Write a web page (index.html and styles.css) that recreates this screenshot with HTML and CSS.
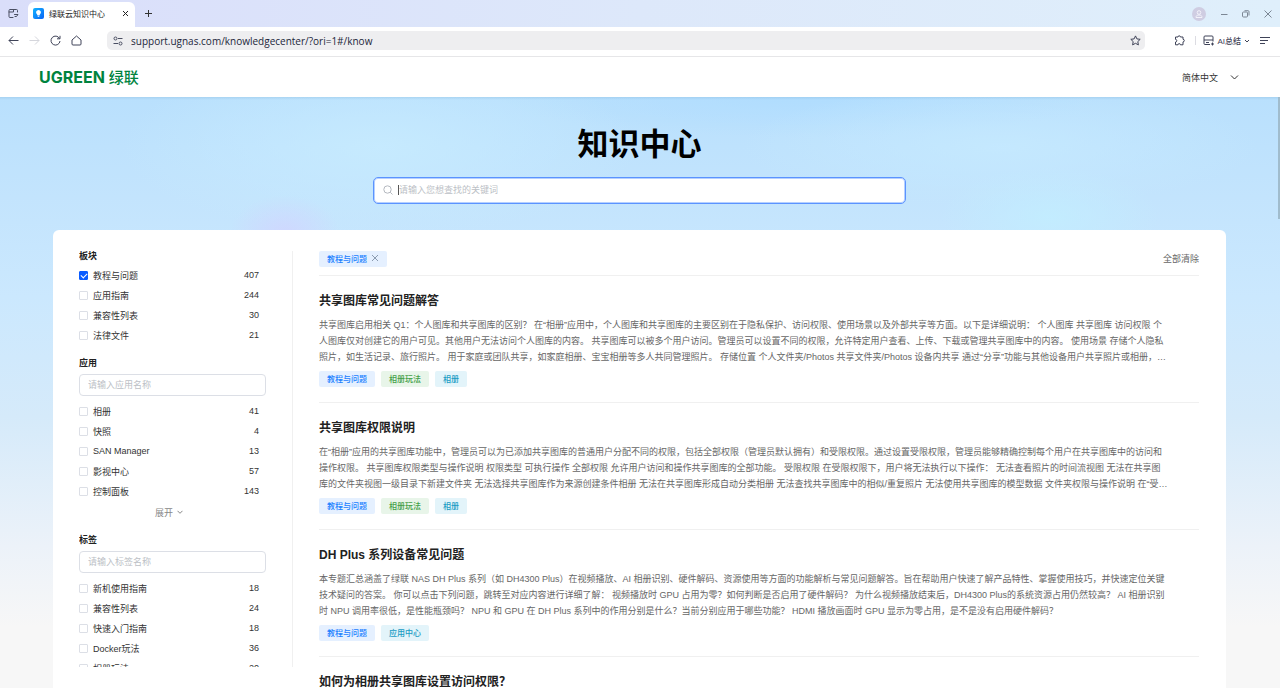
FILE: index.html
```html
<!DOCTYPE html>
<html lang="zh-CN">
<head>
    <meta charset="UTF-8">
    <meta name="viewport" content="width=device-width, initial-scale=1.0">
    <title>绿联云知识中心</title>
    <link rel="stylesheet" href="styles.css">
</head>
<body>
    <!-- 浏览器标签栏 -->
    <div class="tab-bar">
        <button class="icon-button workspace" aria-label="工作区">
            <svg width="11" height="11" viewBox="0 0 11 11" fill="none" stroke="#4a4f63" stroke-linecap="round" stroke-linejoin="round">
                <path d="M5 9.500H2A1 1 0 0 1 1 8.500V2.500A1 1 0 0 1 2 1.500H8.500A1 1 0 0 1 9.500 2.500V4M1 4H5.500V1.500M6.500 6.500H10L8.500 8.500H7"/>
            </svg>
        </button>
        <div class="tab">
            <svg width="11" height="11" viewBox="0 0 11 11">
                <defs>
                    <linearGradient id="fav" x1="0" y1="0" x2="1" y2="1">
                        <stop offset="0" stop-color="#12b4ff"/>
                        <stop offset="1" stop-color="#0a63f6"/>
                    </linearGradient>
                </defs>
                <rect width="11" height="11" rx="2" fill="url(#fav)"/>
                <path d="M5.500 2A2.400 2.400 0 0 1 7 6.300L6.500 7.500H4.500L4 6.300A2.400 2.400 0 0 1 5.500 2ZM4.700 8.200H6.300V9H4.700Z" fill="#fff"/>
            </svg>
            <span class="tab-title">绿联云知识中心</span>
            <button class="icon-button" aria-label="关闭标签页">
                <svg width="7" height="7" viewBox="0 0 7 7" stroke="#222"><path d="M1 1L6 6M6 1L1 6"/></svg>
            </button>
        </div>
        <button class="icon-button new-tab" aria-label="新建标签页">
            <svg width="9" height="9" viewBox="0 0 9 9" stroke="#333"><path d="M4.500 1V8M1 4.500H8"/></svg>
        </button>
        <div class="window-controls">
            <button class="icon-button" aria-label="用户">
                <svg width="14" height="14" viewBox="0 0 14 14">
                    <circle cx="7" cy="7" r="7" fill="#cfcde2"/>
                    <circle cx="7" cy="5.500" r="1.800" fill="none" stroke="#f3f2fa"/>
                    <path d="M4 10.500C4 8.700 5 8 7 8S10 8.700 10 10.500Z" fill="none" stroke="#f3f2fa"/>
                </svg>
            </button>
            <button class="icon-button" aria-label="最小化">
                <svg width="8" height="8" viewBox="0 0 8 8" stroke="#7c8794"><path d="M1 4.500H7.500"/></svg>
            </button>
            <button class="icon-button" aria-label="还原">
                <svg width="8" height="8" viewBox="0 0 8 8" fill="none" stroke="#7c8794"><rect x="0.500" y="2" width="5" height="5" rx="1"/><path d="M2.500 0.700H6A1 1 0 0 1 7 1.700V5.500"/></svg>
            </button>
            <button class="icon-button" aria-label="关闭">
                <svg width="8" height="8" viewBox="0 0 8 8" stroke="#7c8794"><path d="M0.500 0.500L7.500 7.500M7.500 0.500L0.500 7.500"/></svg>
            </button>
        </div>
    </div>

    <!-- 地址栏 -->
    <div class="toolbar">
        <div class="nav-buttons">
            <button class="icon-button" aria-label="后退">
                <svg width="11" height="11" viewBox="0 0 11 11" fill="none" stroke="#3f4358"><path d="M10.500 5.500H1M5 1.500L1 5.500L5 9.500"/></svg>
            </button>
            <button class="icon-button" aria-label="前进">
                <svg width="11" height="11" viewBox="0 0 11 11" fill="none" stroke="#d5d6dc"><path d="M0.500 5.500H10M6 1.500L10 5.500L6 9.500"/></svg>
            </button>
            <button class="icon-button" aria-label="刷新">
                <svg width="11" height="11" viewBox="0 0 11 11" fill="none" stroke="#3f4358"><path d="M9.500 3.500A4.500 4.500 0 1 0 10 6M10 0.800V3.800H7"/></svg>
            </button>
            <button class="icon-button" aria-label="主页">
                <svg width="11" height="11" viewBox="0 0 11 11" fill="none" stroke="#3f4358" stroke-linejoin="round"><path d="M1 5L5.500 1L10 5V9A1 1 0 0 1 9 10H2A1 1 0 0 1 1 9Z"/></svg>
            </button>
        </div>
        <div class="address">
            <svg width="10" height="10" viewBox="0 0 10 10" fill="none" stroke="#4a4f63"><circle cx="2.500" cy="2.500" r="1.500"/><path d="M5 2.500H9.500M0.500 7.500H5"/><circle cx="7.500" cy="7.500" r="1.500"/></svg>
            <input type="text" value="support.ugnas.com/knowledgecenter/?ori=1#/know" aria-label="地址">
            <button class="icon-button" aria-label="收藏">
                <svg width="11" height="11" viewBox="0 0 11 11" fill="none" stroke="#3f4358" stroke-linejoin="round"><path d="M5.500 0.900L6.900 3.900L10.200 4.300L7.800 6.600L8.400 9.900L5.500 8.300L2.600 9.900L3.200 6.600L0.800 4.300L4.100 3.900Z"/></svg>
            </button>
        </div>
        <div class="tools">
            <button class="icon-button" aria-label="扩展">
                <svg width="11" height="11" viewBox="0 0 11 11" fill="none" stroke="#3f4358" stroke-linejoin="round"><path d="M1.500 2H4A1.200 1.200 0 0 1 6.400 2H9V4.300A1.300 1.300 0 0 1 9 6.900V9.800H6.400A1.200 1.200 0 0 0 4 9.800H1.500V7A1.300 1.300 0 0 0 1.500 4.400Z"/></svg>
            </button>
            <span class="divider"></span>
            <button class="ai-button">
                <svg width="11" height="11" viewBox="0 0 11 11" fill="none" stroke="#3f4358"><path d="M7 9.500H2A1 1 0 0 1 1 8.500V2A1 1 0 0 1 2 1H9A1 1 0 0 1 10 2V6.500M1 5H10M3 7.500H6M9.500 7.500V10.500M8 9H11"/></svg>
                AI总结
                <svg width="6" height="6" viewBox="0 0 6 6" fill="none" stroke="#3f4358"><path d="M1 2L3 4L5 2"/></svg>
            </button>
            <button class="icon-button" aria-label="菜单">
                <svg width="10" height="9" viewBox="0 0 10 9" stroke="#3f4358"><path d="M0 1.500H10M0 4.500H8M0 7.500H5"/></svg>
            </button>
        </div>
    </div>

    <!-- 站点头部 -->
    <header class="site-header">
        <a class="logo" href="#"><span class="logo-en">UGREEN</span><span class="logo-cn">绿联</span></a>
        <button class="language">
            简体中文
            <svg width="9" height="9" viewBox="0 0 9 9" fill="none" stroke="#333"><path d="M1 2.500L4.500 6L8 2.500"/></svg>
        </button>
    </header>

    <main class="page">
        <span class="scroll-thumb"></span>
        <h1>知识中心</h1>
        <label class="search-box">
            <svg width="10" height="10" viewBox="0 0 10 10" fill="none" stroke="#b4b8bf"><circle cx="4.500" cy="4.500" r="3.700"/><path d="M7.200 7.200L9.500 9.500"/></svg>
            <span class="caret"></span>
            <input type="text" placeholder="请输入您想查找的关键词" aria-label="搜索">
        </label>

        <div class="panel">
            <!-- 左侧筛选 -->
            <aside class="sidebar">
                <section>
                    <h2>板块</h2>
                    <ul class="options">
                        <li><label><input type="checkbox" checked>教程与问题</label><span>407</span></li>
                        <li><label><input type="checkbox">应用指南</label><span>244</span></li>
                        <li><label><input type="checkbox">兼容性列表</label><span>30</span></li>
                        <li><label><input type="checkbox">法律文件</label><span>21</span></li>
                    </ul>
                </section>
                <section>
                    <h2>应用</h2>
                    <input class="filter-input" type="text" placeholder="请输入应用名称" aria-label="应用名称">
                    <ul class="options">
                        <li><label><input type="checkbox">相册</label><span>41</span></li>
                        <li><label><input type="checkbox">快照</label><span>4</span></li>
                        <li><label><input type="checkbox">SAN Manager</label><span>13</span></li>
                        <li><label><input type="checkbox">影视中心</label><span>57</span></li>
                        <li><label><input type="checkbox">控制面板</label><span>143</span></li>
                    </ul>
                    <button class="expand">
                        展开
                        <svg width="6" height="6" viewBox="0 0 6 6" fill="none" stroke="#888"><path d="M0.500 1.800L3 4.300L5.500 1.800"/></svg>
                    </button>
                </section>
                <section>
                    <h2>标签</h2>
                    <input class="filter-input" type="text" placeholder="请输入标签名称" aria-label="标签名称">
                    <ul class="options">
                        <li><label><input type="checkbox">新机使用指南</label><span>18</span></li>
                        <li><label><input type="checkbox">兼容性列表</label><span>24</span></li>
                        <li><label><input type="checkbox">快速入门指南</label><span>18</span></li>
                        <li><label><input type="checkbox">Docker玩法</label><span>36</span></li>
                        <li><label><input type="checkbox">相册玩法</label><span>20</span></li>
                    </ul>
                </section>
            </aside>

            <!-- 右侧文章列表 -->
            <div class="content">
                <div class="filter-bar">
                    <span class="tag blue">教程与问题
                        <button class="icon-button" aria-label="移除">
                            <svg width="8" height="8" viewBox="0 0 8 8" stroke="#8b9bb0"><path d="M1 1L7 7M7 1L1 7"/></svg>
                        </button>
                    </span>
                    <button class="clear">全部清除</button>
                </div>
                <article>
                    <h3>共享图库常见问题解答</h3>
                    <p>共享图库启用相关 Q1：个人图库和共享图库的区别？ 在“相册”应用中，个人图库和共享图库的主要区别在于隐私保护、访问权限、使用场景以及外部共享等方面。以下是详细说明： 个人图库 共享图库 访问权限 个人图库仅对创建它的用户可见。其他用户无法访问个人图库的内容。 共享图库可以被多个用户访问。管理员可以设置不同的权限，允许特定用户查看、上传、下载或管理共享图库中的内容。 使用场景 存储个人隐私照片，如生活记录、旅行照片。 用于家庭或团队共享，如家庭相册、宝宝相册等多人共同管理照片。 存储位置 个人文件夹/Photos 共享文件夹/Photos 设备内共享 通过“分享”功能与其他设备用户共享照片或相册，…</p>
                    <div class="tags">
                        <span class="tag blue">教程与问题</span>
                        <span class="tag green">相册玩法</span>
                        <span class="tag cyan">相册</span>
                    </div>
                </article>
                <article>
                    <h3>共享图库权限说明</h3>
                    <p>在“相册”应用的共享图库功能中，管理员可以为已添加共享图库的普通用户分配不同的权限，包括全部权限（管理员默认拥有）和受限权限。通过设置受限权限，管理员能够精确控制每个用户在共享图库中的访问和操作权限。 共享图库权限类型与操作说明 权限类型 可执行操作 全部权限 允许用户访问和操作共享图库的全部功能。 受限权限 在受限权限下，用户将无法执行以下操作： 无法查看照片的时间流视图 无法在共享图库的文件夹视图一级目录下新建文件夹 无法选择共享图库作为来源创建条件相册 无法在共享图库形成自动分类相册 无法查找共享图库中的相似/重复照片 无法使用共享图库的模型数据 文件夹权限与操作说明 在“受…</p>
                    <div class="tags">
                        <span class="tag blue">教程与问题</span>
                        <span class="tag green">相册玩法</span>
                        <span class="tag cyan">相册</span>
                    </div>
                </article>
                <article>
                    <h3>DH Plus 系列设备常见问题</h3>
                    <p>本专题汇总涵盖了绿联 NAS DH Plus 系列（如 DH4300 Plus）在视频播放、AI 相册识别、硬件解码、资源使用等方面的功能解析与常见问题解答。旨在帮助用户快速了解产品特性、掌握使用技巧，并快速定位关键技术疑问的答案。 你可以点击下列问题，跳转至对应内容进行详细了解： 视频播放时 GPU 占用为零？如何判断是否启用了硬件解码？ 为什么视频播放结束后，DH4300 Plus的系统资源占用仍然较高？ AI 相册识别时 NPU 调用率很低，是性能瓶颈吗？ NPU 和 GPU 在 DH Plus 系列中的作用分别是什么？当前分别应用于哪些功能？ HDMI 播放画面时 GPU 显示为零占用，是不是没有启用硬件解码？</p>
                    <div class="tags">
                        <span class="tag blue">教程与问题</span>
                        <span class="tag cyan">应用中心</span>
                    </div>
                </article>
                <article>
                    <h3>如何为相册共享图库设置访问权限？</h3>
                </article>
            </div>
        </div>
    </main>
</body>
</html>
```
FILE: styles.css
```css
:root {
    --text-primary: #222;
    --text-secondary: #666;
    --accent: #0a5cff;
    --green: #00833e;
    --border-color: #dcdfe6;
    --line-color: #f0f0f0;
    --chrome-icon: #3f4358;
}

* {
    box-sizing: border-box;
}

body {
    margin: 0;
    height: 100vh;
    overflow: hidden;
    display: flex;
    flex-direction: column;
    background: #fff;
    color: var(--text-primary);
    font-family: "Liberation Sans", "Noto Sans CJK SC", sans-serif;
    font-size: 9px;
}

button, input {
    margin: 0;
    padding: 0;
    border: none;
    background: none;
    color: inherit;
    font: inherit;
    outline: none;
}

svg {
    display: block;
    flex-shrink: 0;
}

h1, h2, h3, p, ul {
    margin: 0;
    padding: 0;
}

.icon-button {
    display: flex;
    flex-shrink: 0;
    cursor: pointer;
}

/* 标签栏 */
.tab-bar {
    display: flex;
    align-items: center;
    height: 27px;
    flex-shrink: 0;
    padding: 0 8px;
    background: linear-gradient(90deg, #dadefa, #dde8fa 50%, #dfeffb);
}

.tab {
    display: flex;
    align-items: center;
    align-self: flex-end;
    gap: 5px;
    width: 107px;
    height: 25px;
    margin-left: 9px;
    padding: 0 6px 2px 5px;
    background: #fff;
    border-radius: 6px 6px 0 0;
}

.tab-title {
    flex: 1;
    font-size: 8px;
    white-space: nowrap;
}

.new-tab {
    margin-left: 9px;
}

.window-controls {
    display: flex;
    align-items: center;
    gap: 14px;
    margin-left: auto;
}

/* 地址栏 */
.toolbar {
    display: flex;
    align-items: center;
    height: 30px;
    flex-shrink: 0;
    padding: 0 10px 2px 8px;
    border-bottom: 1px solid #e6e6e8;
}

.nav-buttons {
    display: flex;
    gap: 10px;
    width: 99px;
}

.address {
    flex: 1;
    display: flex;
    align-items: center;
    gap: 8px;
    height: 19px;
    padding: 0 4px 0 6px;
    background: #eeeef0;
    border-radius: 5px;
}

.address input {
    flex: 1;
    color: #22263a;
    font-family: "Open Sans", sans-serif;
    font-size: 10px;
}

.tools {
    display: flex;
    align-items: center;
    gap: 10px;
    margin-left: 29px;
}

.divider {
    width: 1px;
    height: 9px;
    background: #dcdce2;
}

.ai-button {
    display: flex;
    align-items: center;
    gap: 3px;
    margin-left: -3px;
    color: var(--chrome-icon);
    font-size: 8px;
    font-weight: 500;
}

/* 站点头部 */
.site-header {
    display: flex;
    align-items: center;
    justify-content: space-between;
    height: 40px;
    flex-shrink: 0;
    padding: 0 41px 0 39px;
}

.logo {
    display: flex;
    align-items: center;
    gap: 4px;
    color: var(--green);
    line-height: 16px;
    text-decoration: none;
}

.logo-en {
    font-family: Inter, sans-serif;
    font-size: 16px;
    font-weight: 700;
}

.logo-cn {
    font-family: "Noto Sans CJK SC", sans-serif;
    font-size: 15px;
    font-weight: 500;
}

.language {
    display: flex;
    align-items: center;
    gap: 12px;
    color: #333;
}

/* 页面主体 */
.page {
    position: relative;
    flex: 1;
    min-height: 0;
    display: flex;
    flex-direction: column;
    align-items: center;
    padding: 28px 54px 0 53px;
    overflow: hidden;
    background:
        linear-gradient(rgba(140, 190, 225, 0.4), transparent 3px),
        radial-gradient(55px 38px at 285px 136px, rgba(208, 214, 255, 0.9), transparent),
        radial-gradient(110px 50px at 1050px 120px, rgba(194, 238, 255, 0.8), transparent),
        radial-gradient(260px 90px at 380px 50px, rgba(200, 236, 255, 0.8), transparent),
        radial-gradient(260px 60px at 1000px 50px, rgba(198, 234, 255, 0.8), transparent),
        radial-gradient(300px 40px at 800px 0, rgba(174, 220, 255, 0.8), transparent),
        linear-gradient(#b9e0fd, #c3e4fd 100px, #cbe8fe 200px, #d5eafa 320px, #ecf2f9 450px, #f7f7f7 530px);
}

.scroll-thumb {
    position: absolute;
    top: 0;
    right: 0;
    width: 2px;
    height: 122px;
    background: #a0bccd;
}

h1 {
    color: #000;
    font-size: 31px;
    line-height: 40px;
    font-weight: 700;
}

.search-box {
    display: flex;
    align-items: center;
    width: 533px;
    max-width: 100%;
    height: 27px;
    flex-shrink: 0;
    margin: 12px 0 26px;
    padding: 0 9px 1px;
    background: #fff;
    border: 1px solid #5b93ff;
    border-radius: 5px;
    box-shadow: inset 0 0 0 1px #b5d0ff;
}

.caret {
    width: 1px;
    height: 10px;
    margin-left: 5px;
    background: #555;
}

.search-box input {
    flex: 1;
}

::placeholder {
    color: #bcbfc6;
    opacity: 1;
}

.panel {
    display: flex;
    align-self: stretch;
    flex: 1;
    min-height: 0;
    padding: 21px 27px 0 26px;
    background: #fff;
    border-radius: 6px 6px 0 0;
}

/* 左侧筛选 */
.sidebar {
    width: 214px;
    height: calc(100% - 21px);
    flex-shrink: 0;
    padding-right: 26px;
    overflow: hidden;
    border-right: 1px solid var(--line-color);
}

.sidebar section + section {
    margin-top: 13px;
}

.sidebar h2 {
    font-size: 9px;
    line-height: 10px;
    font-weight: 700;
}

.options {
    margin-top: 4px;
    padding-right: 7px;
    list-style: none;
}

.options li {
    display: flex;
    align-items: center;
    justify-content: space-between;
    height: 20px;
    color: #333;
}

.options label {
    display: flex;
    align-items: center;
    gap: 5px;
}

.options input {
    appearance: none;
    width: 9px;
    height: 9px;
    border: 1px solid var(--border-color);
    border-radius: 1px;
    background: #fff;
}

.options input:checked {
    border-color: var(--accent);
    background: var(--accent);
}

.options input:checked::before {
    content: "";
    display: block;
    width: 3px;
    height: 5px;
    margin-left: 2px;
    border: solid #fff;
    border-width: 0 1px 1px 0;
    transform: rotate(45deg);
}

.filter-input {
    display: block;
    width: 100%;
    height: 22px;
    margin: 6px 0 5px;
    padding: 0 8px;
    border: 1px solid var(--border-color);
    border-radius: 4px;
}

.filter-input + .options {
    margin-top: 5px;
}

.expand {
    display: flex;
    align-items: center;
    justify-content: center;
    gap: 4px;
    width: 100%;
    height: 20px;
    margin-top: 1px;
    padding-right: 7px;
    color: #888;
}

/* 文章列表 */
.content {
    flex: 1;
    min-width: 0;
    padding-left: 26px;
}

.filter-bar {
    display: flex;
    justify-content: space-between;
    height: 25px;
    border-bottom: 1px solid var(--line-color);
}

.clear {
    height: 14px;
    color: var(--text-secondary);
}

.tags {
    display: flex;
    gap: 6px;
}

.tag {
    display: flex;
    align-items: center;
    gap: 4px;
    height: 16px;
    padding: 0 8px 2px;
    border-radius: 2px;
    font-size: 8px;
    font-weight: 500;
}

.tag.blue {
    background: #e5f0ff;
    color: #1a80ff;
}

.tag.green {
    background: #e8f5e9;
    color: #43a047;
}

.tag.cyan {
    background: #e3f4fa;
    color: #1a9cc4;
}

article {
    padding: 17px 0 15px;
    border-bottom: 1px solid var(--line-color);
}

article h3 {
    font-size: 12px;
    line-height: 16px;
    font-weight: 700;
}

article p {
    margin: 8px 0 6px;
    padding-right: 30px;
    color: var(--text-secondary);
    line-height: 16px;
}
```
